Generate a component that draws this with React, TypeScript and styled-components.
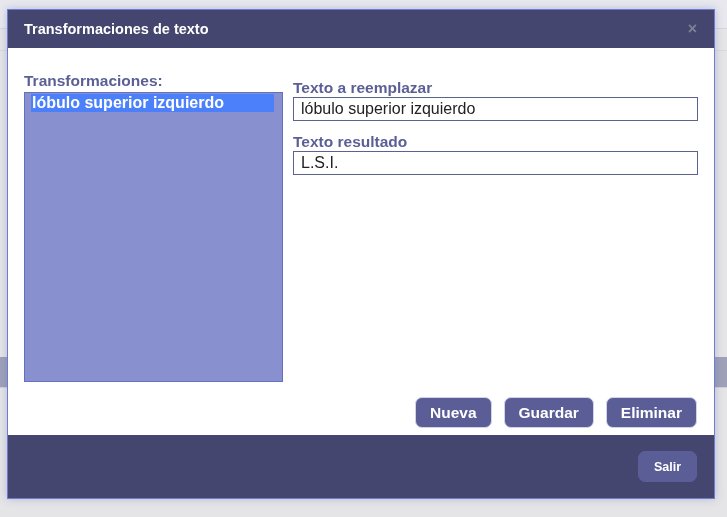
import React from "react";
import styled, { createGlobalStyle } from "styled-components";

const Global = createGlobalStyle`
  html, body { margin: 0; padding: 0; }
  body {
    width: 727px;
    height: 517px;
    overflow: hidden;
    background: #e5e5e7;
    font-family: "Liberation Sans", Arial, sans-serif;
  }
`;

const Page = styled.div`
  height: 517px;
  display: flex;
  flex-direction: column;
`;

const PageTop = styled.div`
  height: 28px;
  background: #e8e8ee;
  border-bottom: 1px solid #d6d6de;
`;

const PageStripe = styled.div`
  height: 21px;
  border-bottom: 1px solid #d9d9df;
`;

const PageBand = styled.div`
  margin-top: 306px;
  height: 30px;
  background: #9fa1b8;
  border-bottom: 1px solid #d0d0d8;
`;

const Overlay = styled.div`
  position: fixed;
  left: 7px;
  top: 9px;
`;

const Dialog = styled.div`
  width: 706px;
  height: 488px;
  border: 1px solid #6b7dd2;
  background: #ffffff;
  box-shadow: 0 0 8px rgba(90, 100, 170, 0.35);
  display: flex;
  flex-direction: column;
`;

const Header = styled.div`
  height: 38px;
  background: #44466f;
  display: flex;
  align-items: center;
  justify-content: space-between;
  padding: 0 16px;
`;

const Title = styled.h1`
  margin: 0;
  font-size: 14.5px;
  font-weight: bold;
  color: #ffffff;
`;

const Close = styled.span`
  font-size: 16px;
  font-weight: bold;
  color: #7f8092;
  line-height: 1;
  margin-right: 1px;
`;

const Body = styled.div`
  flex: 1;
  padding: 24px 16px 6px 16px;
  display: flex;
  flex-direction: column;
`;

const Columns = styled.div`
  display: grid;
  grid-template-columns: 259px 1fr;
  column-gap: 10px;
`;

const Column = styled.div<{ $top?: number }>`
  display: flex;
  flex-direction: column;
  padding-top: ${(p) => p.$top ?? 0}px;
`;

const Label = styled.label`
  font-size: 15.5px;
  font-weight: bold;
  color: #5b5f96;
  line-height: 18px;
`;

const ListBox = styled.div`
  margin-top: 2px;
  height: 287px;
  background: #8890d0;
  border: 1px solid #6270c4;
  padding: 1px 8px 0 6px;
`;

const ListItem = styled.div<{ $selected?: boolean }>`
  height: 18px;
  line-height: 18px;
  font-size: 16px;
  font-weight: bold;
  color: #ffffff;
  padding-left: 1px;
  background: ${(p) => (p.$selected ? "#4c80fb" : "transparent")};
`;

const Field = styled.div`
  height: 22px;
  border: 1px solid #5d6190;
  padding: 0 7px;
  font-size: 16px;
  line-height: 22px;
  color: #222222;
  margin-bottom: 12px;
`;

const Actions = styled.div`
  margin-top: 15px;
  margin-right: 1px;
  display: flex;
  justify-content: flex-end;
  gap: 12px;
`;

const Button = styled.button<{ $small?: boolean }>`
  height: 31px;
  padding: 0 ${(p) => (p.$small ? 15 : 14)}px;
  border: 1px solid ${(p) => (p.$small ? "#5b5e98" : "#d2d3e4")};
  border-radius: 7px;
  background: #5a5d96;
  color: #ffffff;
  font-family: "Liberation Sans", Arial, sans-serif;
  font-weight: bold;
  font-size: ${(p) => (p.$small ? 12.5 : 15.5)}px;
  cursor: pointer;
`;

const Footer = styled.div`
  height: 63px;
  background: #44466f;
  display: flex;
  align-items: center;
  justify-content: flex-end;
  padding: 0 17px;
`;

export default function App() {
  return (
    <>
      <Global />
      <Page>
        <PageTop />
        <PageStripe />
        <PageBand />
      </Page>
      <Overlay>
        <Dialog>
          <Header>
            <Title>Transformaciones de texto</Title>
            <Close>×</Close>
          </Header>
          <Body>
            <Columns>
              <Column>
                <Label>Transformaciones:</Label>
                <ListBox>
                  <ListItem $selected>lóbulo superior izquierdo</ListItem>
                </ListBox>
              </Column>
              <Column $top={7}>
                <Label>Texto a reemplazar</Label>
                <Field>lóbulo superior izquierdo</Field>
                <Label>Texto resultado</Label>
                <Field>L.S.I.</Field>
              </Column>
            </Columns>
            <Actions>
              <Button>Nueva</Button>
              <Button>Guardar</Button>
              <Button>Eliminar</Button>
            </Actions>
          </Body>
          <Footer>
            <Button $small>Salir</Button>
          </Footer>
        </Dialog>
      </Overlay>
    </>
  );
}
